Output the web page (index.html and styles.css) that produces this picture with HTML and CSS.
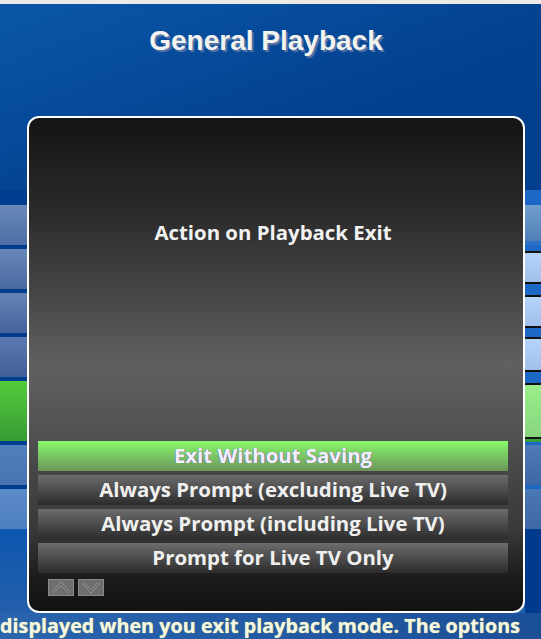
FILE: index.html
```html
<!DOCTYPE html>
<html lang="en">
<head>
<meta charset="utf-8">
<title>General Playback</title>
<link rel="stylesheet" href="styles.css">
</head>
<body>
<div class="screen">
  <div class="topbar"></div>
  <header class="header">
    <h1 class="page-title">General Playback</h1>
  </header>

  <div class="menu">
    <div class="menu-row r1"><span class="cell-l"></span><span class="cell-r"></span></div>
    <div class="menu-row r2"><span class="cell-l"></span><span class="cell-r"></span></div>
    <div class="menu-row r3"><span class="cell-l"></span><span class="cell-r"></span></div>
    <div class="menu-row r4"><span class="cell-l"></span><span class="cell-r"></span></div>
    <div class="menu-row r5 selected"><span class="cell-l"></span><span class="cell-r"></span></div>
    <div class="menu-row r6"><span class="cell-l"></span><span class="cell-r"></span></div>
    <div class="menu-row r7"><span class="cell-l"></span><span class="cell-r"></span></div>
  </div>

  <div class="lower"><span class="cell-l"></span><span class="cell-r"></span></div>

  <div class="help">displayed when you exit playback mode. The options</div>

  <div class="dialog">
    <div class="dialog-title">Action on Playback Exit</div>
    <ul class="options">
      <li class="option active">Exit Without Saving</li>
      <li class="option">Always Prompt (excluding Live TV)</li>
      <li class="option">Always Prompt (including Live TV)</li>
      <li class="option">Prompt for Live TV Only</li>
    </ul>
    <div class="pager">
      <button class="page-btn" aria-label="Up">
        <svg viewBox="0 0 26 17" width="26" height="17"><polyline points="4,14 13,4 22,14" fill="none" stroke="#a0a0a0" stroke-width="3"/><polyline points="4,14 13,4 22,14" fill="none" stroke="#555" stroke-width="1.2"/></svg>
      </button>
      <button class="page-btn" aria-label="Down">
        <svg viewBox="0 0 26 17" width="26" height="17"><polyline points="4,3 13,13 22,3" fill="none" stroke="#a0a0a0" stroke-width="3"/><polyline points="4,3 13,13 22,3" fill="none" stroke="#555" stroke-width="1.2"/></svg>
      </button>
    </div>
  </div>
</div>
</body>
</html>
```
FILE: styles.css
```css
* { box-sizing: border-box; }

html, body {
  margin: 0;
  padding: 0;
  width: 541px;
  height: 639px;
  overflow: hidden;
}

.screen {
  position: relative;
  width: 541px;
  height: 639px;
  display: flex;
  flex-direction: column;
  background: linear-gradient(160deg, #0b57a8 0%, #02418f 28%, #003d8c 65%, #083f8e 100%);
  font-family: "Open Sans", "DejaVu Sans", sans-serif;
}

.topbar {
  height: 4px;
  background: #eceae6;
  flex: none;
}

.header {
  height: 186px;
  flex: none;
  padding: 21px 9px 0 0;
}

.page-title {
  margin: 0;
  text-align: center;
  font-family: "Liberation Sans", Arial, sans-serif;
  font-weight: bold;
  font-size: 28px;
  line-height: 32px;
  color: #f2f2ee;
  text-shadow: 2px 2px 1px #5c76a6;
}

/* rows of the settings menu behind the dialog */
.menu {
  display: flex;
  flex-direction: column;
  gap: 4px;
  padding-top: 15px;
  background: linear-gradient(to right, #003d8f 0, #003d8f 525px, #1c68c4 525px);
  flex: none;
}

.menu-row {
  display: grid;
  grid-template-columns: 1fr 16px;
  height: 40px;
}

.menu-row.selected { height: 60px; }

.cell-l { display: block; }
.cell-r { display: block; }

.r1 .cell-l { background: linear-gradient(#6a89b9, #4c6ea5); }
.r2 .cell-l { background: linear-gradient(#6787b8, #4a6aa2); }
.r3 .cell-l { background: linear-gradient(#6483b5, #46649d); }
.r4 .cell-l { background: linear-gradient(#5b7aaf, #425f98); }
.r5 .cell-l { background: linear-gradient(#52cc3c, #389a36); }
.r6 .cell-l { background: linear-gradient(#4f7fbd, #4773b2); }
.r7 .cell-l { background: linear-gradient(#5b8bc9, #4f80c0); }

.r1 .cell-r {
  background: linear-gradient(#709ecd 0, #4f7fb6 36px, #2a70c4 36px);
}
.r2 .cell-r, .r3 .cell-r, .r4 .cell-r {
  background: linear-gradient(#b4d4fa, #a0c0ec);
  border-top: 2px solid #111;
  border-bottom: 2px solid #111;
  margin: 2px 0 5px;
}
.r4 .cell-r { margin: 0 0 5px; }
.r5 .cell-r {
  background: linear-gradient(#9aee88, #88d480);
  border-top: 2px solid #111;
  border-bottom: 2px solid #111;
  margin: 2px 0 2px;
  box-shadow: 0 3px 0 #35a03a;
}
.r6 .cell-r { background: linear-gradient(#4f7ab6, #3e66a6); }
.r7 .cell-r { background: linear-gradient(#4a78b4, #3e68a8); }

.lower {
  display: grid;
  grid-template-columns: 1fr 16px;
  height: 84px;
  flex: none;
}
.lower .cell-l { background: linear-gradient(#0c56b0, #245fab); }
.lower .cell-r { background: #003a8c; }

.help {
  flex: 1;
  background: linear-gradient(to right, #2a65ae, #1b4f98);
  color: #f6f6e4;
  font-weight: bold;
  font-size: 19.8px;
  line-height: 26px;
  white-space: nowrap;
  overflow: hidden;
  text-shadow: 0 0 1px rgba(255, 255, 60, 0.7);
}

/* modal dialog lying over the menu */
.dialog {
  position: absolute;
  left: 27px;
  top: 116px;
  width: 498px;
  height: 497px;
  border: 2px solid #fff;
  border-radius: 12px;
  background: linear-gradient(#141414 0%, #2c2c2c 20%, #4a4a4a 38%, #606060 50%, #565656 60%, #464646 72%, #383838 84%, #1c1c1c 93%, #111 100%);
  display: flex;
  flex-direction: column;
  padding: 0 15px 0 9px;
}

.dialog-title {
  margin-top: 101px;
  text-align: center;
  color: #f2f2f2;
  font-weight: bold;
  font-size: 20.4px;
  line-height: 26px;
}

.options {
  list-style: none;
  margin: 196px 0 0;
  padding: 0;
  display: flex;
  flex-direction: column;
  gap: 4px;
}

.option {
  height: 30px;
  line-height: 28px;
  text-align: center;
  color: #f0f0f0;
  font-weight: bold;
  font-size: 20.4px;
  background: linear-gradient(#6c6c6c, #2c2c2c);
}

.option.active {
  background: linear-gradient(#88f86c, #6a955a);
  color: #f4f0ff;
  text-shadow: 1px 0 0 rgba(210, 0, 255, 0.35), -1px 0 0 rgba(60, 60, 255, 0.3);
}

.pager {
  display: flex;
  gap: 4px;
  margin-top: 6px;
  padding-left: 10px;
}

.page-btn {
  width: 26px;
  height: 17px;
  padding: 0;
  border: 1px solid #8a8a8a;
  background: #6e6e6e;
  display: block;
}

.page-btn svg {
  display: block;
  width: 24px;
  height: 15px;
}
```
